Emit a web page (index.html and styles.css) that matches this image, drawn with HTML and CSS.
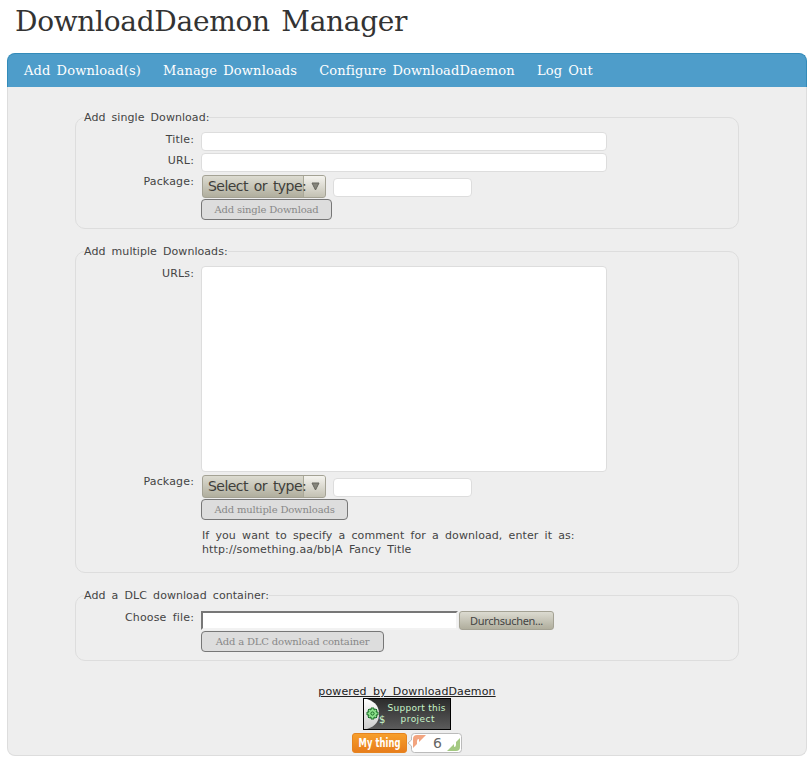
FILE: index.html
```html
<!DOCTYPE html>
<html lang="en">
<head>
<meta charset="utf-8">
<title>DownloadDaemon Manager</title>
<link rel="stylesheet" href="styles.css">
</head>
<body>
<h1><span>DownloadDaemon Manager</span></h1>
<nav>
  <a>Add Download(s)</a><a>Manage Downloads</a><a>Configure DownloadDaemon</a><a>Log Out</a>
</nav>
<main>
  <fieldset class="single">
    <legend>Add single Download:</legend>
    <div class="row text-row"><label>Title:</label><div class="field wide"></div></div>
    <div class="row text-row"><label>URL:</label><div class="field wide"></div></div>
    <div class="row package"><label>Package:</label><div class="select"><span>Select or type:</span><i><svg width="9" height="9" viewBox="0 0 9 9"><path d="M1 1h7L4.500 8z" fill="#85857b" stroke="#66665e"/></svg></i></div><div class="field short"></div></div>
    <div class="button b1">Add single Download</div>
  </fieldset>
  <fieldset class="multiple">
    <legend>Add multiple Downloads:</legend>
    <div class="row area-row"><label>URLs:</label><div class="field area"></div></div>
    <div class="row package"><label>Package:</label><div class="select"><span>Select or type:</span><i><svg width="9" height="9" viewBox="0 0 9 9"><path d="M1 1h7L4.500 8z" fill="#85857b" stroke="#66665e"/></svg></i></div><div class="field short"></div></div>
    <div class="button b2">Add multiple Downloads</div>
    <p class="hint">If you want to specify a comment for a download, enter it as:<br><span>http://something.aa/bb|A Fancy Title</span></p>
  </fieldset>
  <fieldset class="container">
    <legend>Add a DLC download container:</legend>
    <div class="row file-row"><label>Choose file:</label><div class="file"></div><div class="browse">Durchsuchen...</div></div>
    <div class="button b3">Add a DLC download container</div>
  </fieldset>
  <footer>
    <a class="powered">powered by DownloadDaemon</a>
    <svg class="support" width="88" height="32" viewBox="0 0 88 32">
      <defs>
        <linearGradient id="dark" x1="0" y1="0" x2="0" y2="1"><stop offset="0" stop-color="#2b2b2b"/><stop offset="1" stop-color="#5c5c5c"/></linearGradient>
        <linearGradient id="disc" x1="0" y1="0" x2="0" y2="1"><stop offset="0" stop-color="#fff"/><stop offset="1" stop-color="#ccc"/></linearGradient>
      </defs>
      <rect x=".5" y=".5" width="87" height="31" fill="url(#dark)" stroke="#000"/>
      <path d="M1 1h3C13 4 16 9 16 16S13 28 4 31H1z" fill="url(#disc)"/>
      <g fill="#8ee28d" stroke="#176b25"><path d="M8 10h3v2l2-1 1 1-1 2h2v3h-2l1 2-1 1-2-1v2H8v-2l-2 1-1-1 1-2H4v-3h2l-1-2 1-1 2 1z"/><circle cx="9.500" cy="15.500" r="1.600"/></g>
      <g class="support-text"><text class="dollar" x="16" y="25">$</text><text x="24.500" y="13" textLength="58">Support this</text><text x="37.500" y="24" textLength="34">project</text></g>
    </svg>
    <svg class="flattr" width="111" height="20" viewBox="0 0 111 20">
      <defs><linearGradient id="orange" x1="0" y1="0" x2="0" y2="1"><stop offset="0" stop-color="#f7a02c"/><stop offset="1" stop-color="#e77c1b"/></linearGradient></defs>
      <rect x=".5" y=".5" width="54" height="19" rx="2.500" fill="url(#orange)" stroke="#e58420"/>
      <text class="thing" transform="translate(6.500 14) scale(1 1.150)" textLength="42" lengthAdjust="spacingAndGlyphs">My thing</text>
      <path d="M62.500.500h44q3 0 3 3v13q0 3-3 3h-44q-3 0-3-3V13L56 10l3.500-3V3.500q0-3 3-3z" fill="#fff" stroke="#bbb"/>
      <path d="M61 15V6q0-4 4-4h9l-7 7V6q-2 0-2 2v3z" fill="#f2a47f"/>
      <path d="M108 5v9q0 4-4 4h-9l7-7v3q2 0 2-2V9z" fill="#a4c982"/>
      <text class="count" x="81" y="15">6</text>
    </svg>
  </footer>
</main>
</body>
</html>
```
FILE: styles.css
```css
* { box-sizing: border-box; }
body { margin: 0 4px 0 7px; background: #fff; color: #444; font: 11px/14px "DejaVu Sans", sans-serif; word-spacing: 2.6px; letter-spacing: .08px; }
h1 { margin: 0; height: 53px; padding: 4px 0 0 8px; color: #333; font: 28px/36px "DejaVu Serif", serif; word-spacing: 3px; letter-spacing: -.3px; }
nav { display: flex; gap: 22px; height: 34px; padding: 1px 16px 0; border: 1px solid #338bb9; border-bottom: 0; border-radius: 8px 8px 0 0; background: #4e9dca; color: #fff; font: 13px/32px "DejaVu Serif", serif; word-spacing: 1.8px; letter-spacing: .16px; white-space: nowrap; }
main { height: 669px; padding: 23px 67px 0; border: 1px solid #ddd; border-top: 0; border-radius: 0 0 8px 8px; background: #eee; }
fieldset { min-width: 0; margin: 0 0 15px; padding: 7px 0 0; border: 1px solid #ddd; border-radius: 10px; }
legend { margin-left: 8px; padding: 0; height: 15px; line-height: 15px; letter-spacing: .05px; }
.single { height: 119px; }
.multiple { height: 329px; }
.container { height: 73px; padding-top: 8px; }
.row { display: flex; align-items: flex-start; }
.row label { width: 118px; margin-right: 7px; padding-top: 1px; text-align: right; letter-spacing: .15px; white-space: nowrap; }
.text-row { height: 21px; }
.field { height: 19px; border: 1px solid #ddd; border-radius: 4px; background: #fff; }
.wide, .area { width: 406px; }
.area { height: 206px; }
.area-row { height: 208px; }
.short { width: 139px; margin: 4px 0 0 7px; }
.package { height: 25px; }
.select { display: flex; width: 124px; height: 23px; margin: 1px 0 0 1px; border: 1px solid #a4a294; border-radius: 3px; background: linear-gradient(#dcdbd1, #b0ae9d); color: #3f3f3b; font-size: 14px; line-height: 21px; word-spacing: 2px; letter-spacing: -.55px; }
.select span { position: relative; z-index: 1; width: 100px; padding-left: 5px; white-space: nowrap; }
.select i { display: flex; flex: 1; align-items: center; justify-content: center; padding-left: 2px; border-left: 1px solid #aaa999; border-radius: 0 2px 2px 0; background: linear-gradient(#f4f3ee, #c3c1b3); }
.button { height: 21px; margin-left: 125px; border: 1px solid #777; border-radius: 4px; background: #ddd; color: #888; font: 10px/19px "DejaVu Serif", serif; word-spacing: 0; letter-spacing: -.17px; text-align: center; white-space: nowrap; }
.b1 { width: 131px; }
.b2 { width: 147px; }
.b3 { width: 183px; }
.hint { margin: 9px 0 0 126px; }
.hint span { letter-spacing: .12px; }
.file-row { height: 20px; }
.container label { padding-top: 0; }
.file { width: 257px; height: 19px; border: 2px solid #f2f2f2; border-top-color: #777; border-left-color: #777; background: #fff; }
.browse { width: 95px; height: 19px; margin-left: 1px; border: 1px solid #a4a294; border-radius: 3px; background: linear-gradient(#dcdbd1, #b0ae9d); color: #444; font: 11px/17px "Noto Sans", sans-serif; letter-spacing: -.3px; text-align: center; }
footer { display: flex; flex-direction: column; align-items: center; padding-top: 9px; }
.powered { height: 13px; color: #222; text-decoration: underline; letter-spacing: .12px; }
.support-text { fill: #c9f5c9; font: 9px "DejaVu Sans", sans-serif; word-spacing: 0; letter-spacing: 0; }
.dollar { font-size: 10px; }
.flattr { margin-top: 3px; }
.thing { fill: #fff; font: bold 11px "DejaVu Sans Condensed", "DejaVu Sans", sans-serif; word-spacing: 0; }
.count { fill: #666; font: 14px "DejaVu Sans", sans-serif; }
```
